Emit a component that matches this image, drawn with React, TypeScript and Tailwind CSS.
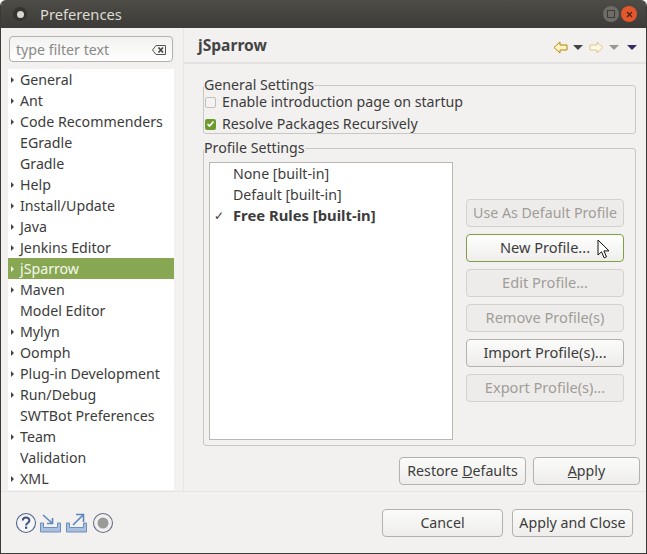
const treeItems: [string, boolean][] = [
  ["General", true],
  ["Ant", true],
  ["Code Recommenders", true],
  ["EGradle", false],
  ["Gradle", false],
  ["Help", true],
  ["Install/Update", true],
  ["Java", true],
  ["Jenkins Editor", true],
  ["jSparrow", true],
  ["Maven", true],
  ["Model Editor", false],
  ["Mylyn", true],
  ["Oomph", true],
  ["Plug-in Development", true],
  ["Run/Debug", true],
  ["SWTBot Preferences", false],
  ["Team", true],
  ["Validation", false],
  ["XML", true],
];

function TreeRow({ label, arrow }: { label: string; arrow: boolean }) {
  const active = label === "jSparrow";
  return (
    <div className={`flex h-[21px] shrink-0 items-center whitespace-nowrap pl-[3px] ${active ? "bg-[#87a752] text-[#f6f8ee]" : "text-[#3c3c3c]"}`}>
      <span className="flex w-[9px] shrink-0">
        {arrow && (
          <svg width="3" height="6" viewBox="0 0 3 6" className={active ? "fill-[#f2f5e8]" : "fill-[#444]"}>
            <path d="M0 0l3 3-3 3z" />
          </svg>
        )}
      </span>
      {label}
    </div>
  );
}

function Btn({ children, w, disabled, focus }: { children: React.ReactNode; w: string; disabled?: boolean; focus?: boolean }) {
  return (
    <div
      className={`flex h-[28px] shrink-0 items-center justify-center whitespace-nowrap rounded-[4px] border ${w} ${
        disabled
          ? "border-[#d3d1cd] bg-[#eeecea] text-[#a09d98]"
          : focus
            ? "border-[#7ba23f] bg-gradient-to-b from-white to-[#efeeec] text-[#3c3c3c]"
            : "border-[#b4b1ac] bg-gradient-to-b from-[#fbfbfa] to-[#eeedeb] text-[#3c3c3c]"
      }`}
    >
      {children}
    </div>
  );
}

function NavArrow({ flip, stroke, fill }: { flip?: boolean; stroke: string; fill: string }) {
  return (
    <svg width="15" height="13" viewBox="0 0 15 13" className={flip ? "-scale-x-100" : ""}>
      <path d="M7 1L1 6.5 7 12V9h7V4H7z" fill={fill} stroke={stroke} strokeWidth="1" strokeLinejoin="round" />
    </svg>
  );
}

function Tri({ color }: { color: string }) {
  return (
    <svg width="10" height="5" viewBox="0 0 10 5" className="block">
      <path d="M0 0h10L5 5z" fill={color} />
    </svg>
  );
}

export default function App() {
  return (
    <div className="flex h-[554px] w-[647px] flex-col overflow-hidden rounded-t-[6px] border-x border-b border-[#3b3a36] bg-[#f2f1f0] text-[14.2px] text-[#3c3c3c] [font-family:'Noto_Sans',sans-serif]">
      {/* title bar */}
      <div className="flex h-[28px] shrink-0 items-center bg-gradient-to-b from-[#4d4c47] to-[#3c3b37] pl-[12px] pr-[9px] text-[#dfdbd2]">
        <span className="flex h-[14px] w-[14px] items-center justify-center rounded-full bg-[#35342f]">
          <span className="h-[7px] w-[7px] rounded-full bg-[#d8d6d0]" />
        </span>
        <span className="ml-[13px] text-[14.7px]">Preferences</span>
        <span className="ml-auto flex h-[16px] w-[16px] items-center justify-center rounded-full bg-[#6d6c67]">
          <span className="h-[8px] w-[8px] border border-[#3c3b37]" />
        </span>
        <span className="ml-[2px] flex h-[16px] w-[16px] items-center justify-center rounded-full bg-[#e2572b]">
          <svg width="7" height="7" viewBox="0 0 7 7" stroke="#4a2113" strokeWidth="1.2">
            <path d="M1 1l5 5M6 1L1 6" />
          </svg>
        </span>
      </div>

      <div className="flex min-h-0 flex-1">
        {/* left tree */}
        <div className="flex w-[183px] shrink-0 flex-col border-r border-[#e6e5e3] pl-[7px] pr-[9px] pt-[8px]">
          <div className="mx-[1px] flex h-[26px] items-center rounded-[4px] border border-[#b4b1ac] bg-gradient-to-b from-[#f3f2f1] to-white px-[6px] pt-[1px] text-[#8a8a86]">
            type filter text
            <svg width="14" height="10" viewBox="0 0 14 10" className="ml-auto">
              <path d="M4 .5h9.5v9H4L.5 5z" fill="#f4f4f3" stroke="#555" />
              <path d="M6.5 2.5l4.5 5M11 2.5l-4.5 5" stroke="#444" strokeWidth="1.6" />
            </svg>
          </div>
          <div className="mt-[7px] flex h-[421px] flex-col overflow-hidden bg-white">
            {treeItems.map(([label, arrow]) => (
              <TreeRow key={label} label={label} arrow={arrow} />
            ))}
          </div>
        </div>

        {/* right page */}
        <div className="flex min-w-0 flex-1 flex-col">
          <div className="flex h-[36px] shrink-0 items-center border-b-2 border-[#e4e3e1] pl-[14px] pr-[9px] pt-[3px]">
            <span className="-mt-[1px] text-[15.6px] font-bold text-[#444]">jSparrow</span>
            <div className="ml-auto mt-[1px] flex items-center">
              <NavArrow stroke="#b8860b" fill="#fff3c4" />
              <span className="ml-[5px]"><Tri color="#444" /></span>
              <span className="ml-[6px]"><NavArrow flip stroke="#dcc58d" fill="#fdf8e6" /></span>
              <span className="ml-[5px]"><Tri color="#99978f" /></span>
              <span className="ml-[8px]"><Tri color="#3a2a63" /></span>
            </div>
          </div>

          <div className="flex flex-1 flex-col pl-[19px] pr-[6px]">
            <fieldset className="mr-[4px] mt-[13px] h-[57px] rounded-[3px] border border-[#c9c7c3]">
              <legend className="leading-[16px]">General Settings</legend>
              <div className="-mt-[2px] flex h-[22px] items-center pl-[1px]">
                <span className="h-[11px] w-[11px] rounded-[2px] border border-[#c2c0bb] bg-[#f4f3f2]" />
                <span className="ml-[6px]">Enable introduction page on startup</span>
              </div>
              <div className="flex h-[22px] items-center pl-[1px]">
                <span className="flex h-[11px] w-[11px] items-center justify-center rounded-[2px] bg-[#6f9a2f]">
                  <svg width="9" height="8" viewBox="0 0 9 8" fill="none" stroke="#fff" strokeWidth="1.6">
                    <path d="M1.5 4l2 2 4-4.5" />
                  </svg>
                </span>
                <span className="ml-[6px]">Resolve Packages Recursively</span>
              </div>
            </fieldset>

            <fieldset className="mr-[4px] mt-[6px] h-[306px] rounded-[3px] border border-[#c9c7c3] pl-[5px]">
              <legend className="-ml-[5px] leading-[16px]">Profile Settings</legend>
              <div className="mt-[6px] flex">
                <div className="h-[278px] w-[244px] shrink-0 border border-[#b9b7b2] bg-white">
                  <div className="flex h-[21px] items-center pl-[23px]">None [built-in]</div>
                  <div className="flex h-[21px] items-center pl-[23px]">Default [built-in]</div>
                  <div className="flex h-[21px] items-center text-[14.8px] font-bold text-[#3c3c3c]">
                    <span className="w-[23px] pl-[4px] text-[12px] font-normal">✓</span>
                    Free Rules [built-in]
                  </div>
                </div>
                <div className="ml-[13px] flex flex-col gap-[7px] pt-[37px]">
                  <Btn w="w-[158px]" disabled>Use As Default Profile</Btn>
                  <div className="relative">
                    <Btn w="w-[158px] text-[14.6px]" focus>New Profile...</Btn>
                    <svg width="14" height="20" viewBox="0 0 14 20" className="absolute left-[131px] top-[5px]">
                      <path d="M1 1v15l3.5-3.2 2.6 6 2.4-1-2.6-5.9H12z" fill="#fff" stroke="#111" strokeWidth="1" strokeLinejoin="round" />
                    </svg>
                  </div>
                  <Btn w="w-[158px] text-[14.6px]" disabled>Edit Profile...</Btn>
                  <Btn w="w-[158px] text-[14.6px]" disabled>Remove Profile(s)</Btn>
                  <Btn w="w-[158px] text-[14.6px]">Import Profile(s)...</Btn>
                  <Btn w="w-[158px] text-[14.6px]" disabled>Export Profile(s)...</Btn>
                </div>
              </div>
            </fieldset>

            <div className="mt-[11px] flex justify-end gap-[7px]">
              <Btn w="w-[127px]">Restore <span className="ml-[4px] underline">D</span>efaults</Btn>
              <Btn w="w-[107px]"><span className="underline">A</span>pply</Btn>
            </div>
          </div>
        </div>
      </div>

      {/* footer */}
      <div className="flex h-[62px] shrink-0 items-start border-t border-[#e4e3e1] pl-[14px] pr-[13px] pt-[17px]">
        <div className="flex items-center pt-[3px]">
          <svg width="22" height="22" viewBox="0 0 22 22" className="mr-[2px]">
            <circle cx="11" cy="11" r="9.5" fill="#f6f6f8" stroke="#4f6488" strokeWidth="1.1" />
            <path d="M7.8 8.5c0-4 6.6-4 6.6 0 0 2.6-3.3 2.4-3.3 5" fill="none" stroke="#3f5278" strokeWidth="2" />
            <rect x="10" y="14.6" width="2.2" height="2.2" fill="#3f5278" />
          </svg>
          <svg width="24" height="22" viewBox="0 0 24 22">
            <path d="M1.5 11v9h20v-9h-3v4.5h-14V11z" fill="#a9c0df" stroke="#6d8fbe" />
            <path d="M4 3l9 8M13.5 6v5.5H8" fill="none" stroke="#5c88bd" strokeWidth="1.6" />
          </svg>
          <svg width="24" height="22" viewBox="0 0 24 22" className="ml-[2px]">
            <path d="M1.5 11v9h20v-9h-3v4.5h-14V11z" fill="#a9c0df" stroke="#6d8fbe" />
            <path d="M8 13l10-10M11 2.5h7.5V10" fill="none" stroke="#5c88bd" strokeWidth="1.6" />
          </svg>
          <svg width="22" height="22" viewBox="0 0 22 22" className="ml-[3px]">
            <circle cx="11" cy="11" r="9.5" fill="#f2f1f0" stroke="#66708a" strokeWidth="1.1" />
            <circle cx="11" cy="11" r="5.5" fill="#9a9a98" />
          </svg>
        </div>
        <div className="ml-auto flex gap-[9px]">
          <Btn w="w-[121px]">Cancel</Btn>
          <Btn w="w-[121px]">Apply and Close</Btn>
        </div>
      </div>
    </div>
  );
}
